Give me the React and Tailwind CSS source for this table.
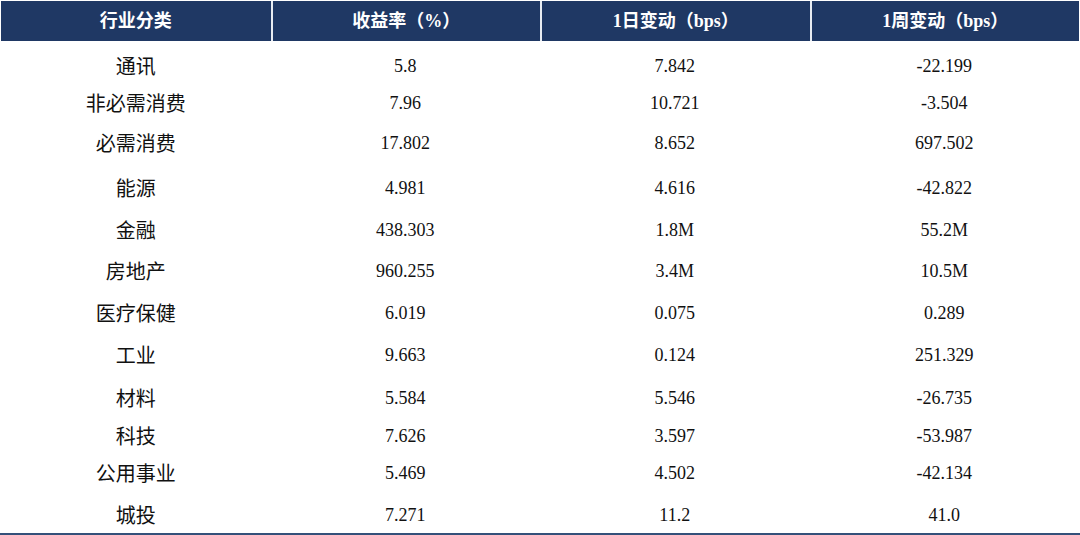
import React from 'react';

const headers = ['行业分类', '收益率（%）', '1日变动（bps）', '1周变动（bps）'];

// row top margin keeps each line where the source table put it
const rows = [
  { mt: 'mt-[7px]', cells: ['通讯', '5.8', '7.842', '-22.199'] },
  { mt: 'mt-[1px]', cells: ['非必需消费', '7.96', '10.721', '-3.504'] },
  { mt: 'mt-[4px]', cells: ['必需消费', '17.802', '8.652', '697.502'] },
  { mt: 'mt-[9px]', cells: ['能源', '4.981', '4.616', '-42.822'] },
  { mt: 'mt-[6px]', cells: ['金融', '438.303', '1.8M', '55.2M'] },
  { mt: 'mt-[5px]', cells: ['房地产', '960.255', '3.4M', '10.5M'] },
  { mt: 'mt-[6px]', cells: ['医疗保健', '6.019', '0.075', '0.289'] },
  { mt: 'mt-[6px]', cells: ['工业', '9.663', '0.124', '251.329'] },
  { mt: 'mt-[7px]', cells: ['材料', '5.584', '5.546', '-26.735'] },
  { mt: 'mt-[2px]', cells: ['科技', '7.626', '3.597', '-53.987'] },
  { mt: 'mt-[1px]', cells: ['公用事业', '5.469', '4.502', '-42.134'] },
  { mt: 'mt-[6px]', cells: ['城投', '7.271', '11.2', '41.0'] },
];

export default function App() {
  return (
    <div className="w-[1080px] h-[535px] bg-white flex flex-col overflow-hidden">
      {/* Header */}
      <div className="shrink-0 mt-[1px] mx-[1px] h-[40px] grid grid-cols-4 bg-[#1f3864] text-white font-bold text-[18px] font-['Liberation_Serif','Noto_Sans_CJK_SC',serif]">
        {headers.map((h, i) => (
          <div
            key={h}
            className={`flex items-center justify-center ${i > 0 ? 'border-l-2 border-[#e8ecf2]' : ''}`}
          >
            {h}
          </div>
        ))}
      </div>

      {/* Body */}
      <div className="shrink-0 flex flex-col mx-[1px]">
        {rows.map((r) => (
          <div key={r.cells[0]} className={`shrink-0 h-[36px] grid grid-cols-4 items-center text-[#111] ${r.mt}`}>
            <div className="text-center text-[20px] font-['Noto_Sans_CJK_SC',sans-serif]">{r.cells[0]}</div>
            {r.cells.slice(1).map((c, j) => (
              <div key={j} className="text-center text-[18px] font-['Liberation_Serif',serif]">
                {c}
              </div>
            ))}
          </div>
        ))}
      </div>

      <div className="shrink-0 mt-auto h-[2px] bg-[#34507a]" />
    </div>
  );
}
